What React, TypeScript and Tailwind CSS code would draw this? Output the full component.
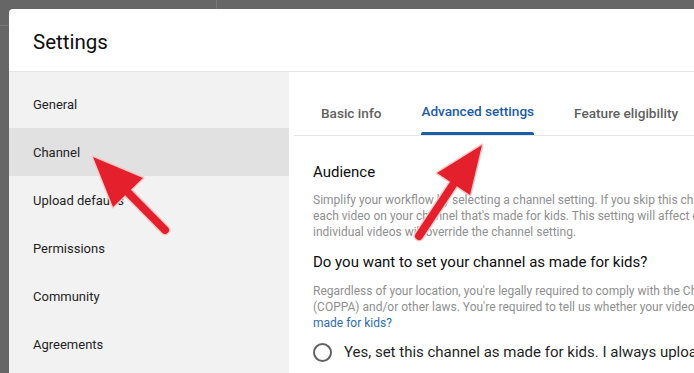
import React from "react";

const font = { fontFamily: "Roboto, 'Noto Sans', Arial, sans-serif" };

function Arrow({ tip, c1, c2, tail }: { tip: [number, number]; c1: [number, number]; c2: [number, number]; tail: [number, number] }) {
  const mid: [number, number] = [(c1[0] + c2[0]) / 2, (c1[1] + c2[1]) / 2];
  const head = `${tip[0]},${tip[1]} ${c1[0]},${c1[1]} ${c2[0]},${c2[1]}`;
  return (
    <g>
      <line x1={mid[0]} y1={mid[1]} x2={tail[0]} y2={tail[1]} stroke="#f6c9c9" strokeWidth={11} strokeLinecap="round" />
      <polygon points={head} fill="#f6c9c9" stroke="#f6c9c9" strokeWidth={3} strokeLinejoin="round" />
      <line x1={mid[0]} y1={mid[1]} x2={tail[0]} y2={tail[1]} stroke="#e3202b" strokeWidth={8} strokeLinecap="round" />
      <polygon points={head} fill="#e3202b" />
    </g>
  );
}

const menu = ["General", "Channel", "Upload defaults", "Permissions", "Community", "Agreements"];

export default function App() {
  return (
    <div className="relative w-[694px] h-[373px] overflow-hidden bg-[#666666]" style={font}>
      {/* background page */}
      <div className="flex h-[26px] border-b border-[#777777]">
        <div className="w-[217px] border-r border-[#777777]" />
        <div className="flex-1" />
      </div>

      {/* dialog */}
      <div className="absolute left-[9px] top-[9px] w-[960px] h-[500px] bg-white rounded-tl-[4px] flex flex-col">
        <div className="h-[63px] pt-[19px] pl-[24px] border-b border-[#e5e5e5]">
          <div className="text-[20.5px] leading-[28px] text-[#0d0d0d]">Settings</div>
        </div>
        <div className="flex flex-1">
          <div className="w-[280px] bg-[#f2f2f2] pt-[8px]">
            {menu.map((m) => (
              <div
                key={m}
                className={`h-[48px] flex items-center pl-[24px] pt-[1px] text-[13px] text-[#1f1f1f] ${m === "Channel" ? "bg-[#e1e1e1]" : ""}`}
              >
                {m}
              </div>
            ))}
          </div>
          <div className="flex-1 flex flex-col">
            <div className="ml-[5px] pt-[15px] border-b border-[#e5e5e5] flex gap-[40px] pl-[27px]">
              <div className="h-[48px] flex items-center pt-[4px] text-[13.6px] font-medium text-[#606060]">Basic info</div>
              <div className="h-[48px] flex flex-col text-[13.6px] font-medium text-[#1c5ca6]">
                <div className="flex-1 flex items-center pt-[4px]">Advanced settings</div>
                <div className="h-[3px] bg-[#1c5ca6] rounded-t-[2px]" />
              </div>
              <div className="h-[48px] flex items-center pt-[4px] text-[13.6px] font-medium text-[#606060]">Feature eligibility</div>
            </div>
            <div className="pl-[24px]">
              <div className="mt-[24px] text-[15px] leading-[24px] text-[#0d0d0d]">Audience</div>
              <div className="mt-[8px] text-[12px] leading-[16px] text-[#8f8f8f] whitespace-nowrap">
                <div>Simplify your workflow by selecting a channel setting. If you skip this choice, you'll have to set</div>
                <div>each video on your channel that's made for kids. This setting will affect existing and future videos. Settings on</div>
                <div>individual videos will override the channel setting.</div>
              </div>
              <div className="mt-[10px] text-[15px] leading-[24px] text-[#0d0d0d]">Do you want to set your channel as made for kids?</div>
              <div className="mt-[9px] text-[12px] leading-[16px] text-[#8f8f8f] whitespace-nowrap">
                <div>Regardless of your location, you're legally required to comply with the Children's Online Privacy Protection Act</div>
                <div>
                  (COPPA) and/or other laws. You're required to tell us whether your videos are made for kids.{" "}
                  <span className="text-[#2d6cb0]">What's content</span>
                </div>
                <div className="text-[#2d6cb0]">made for kids?</div>
              </div>
              <div className="mt-[9px] h-[24px] flex items-center gap-[12px] whitespace-nowrap">
                <div className="w-[19px] h-[19px] rounded-full border-2 border-[#616161]" />
                <div className="text-[15px] text-[#1f1f1f]">Yes, set this channel as made for kids. I always upload content that's made for kids.</div>
              </div>
            </div>
          </div>
        </div>
      </div>

      {/* annotation arrows */}
      <svg className="absolute left-0 top-0" width={694} height={373} viewBox="0 0 694 373">
        <Arrow tip={[93, 157]} c1={[143, 178]} c2={[113, 207]} tail={[165, 230]} />
        <Arrow tip={[482, 145]} c1={[437, 173]} c2={[470, 195]} tail={[419, 236]} />
      </svg>
    </div>
  );
}
